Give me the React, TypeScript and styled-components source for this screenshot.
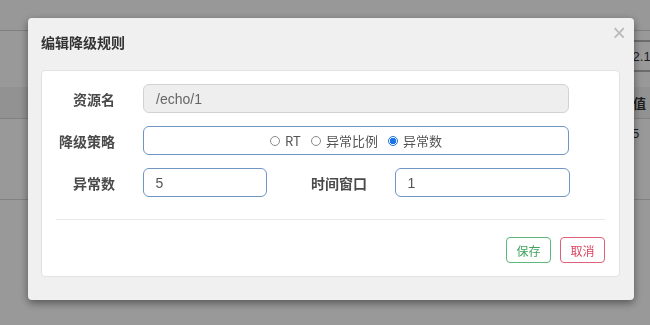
import React from 'react'
import styled, { createGlobalStyle } from 'styled-components';

const GlobalStyle = createGlobalStyle`
  html, body {
    margin: 0;
    padding: 0;
    background: #fff;
    font-family: "Liberation Sans", "Noto Sans CJK SC", sans-serif;
  }
  #root {
    width: 650px;
    height: 325px;
    overflow: hidden;
  }
`;

const strategies = [
  { key: 'rt', label: 'RT' },
  { key: 'ratio', label: '异常比例' },
  { key: 'count', label: '异常数' },
];

function App() {
  const checked = 'count';
  return (
    <Page>
      <GlobalStyle />
      <Navbar />
      <Content>
        <Toolbar>
          <MachineText>192.168.2.16</MachineText>
        </Toolbar>
        <Table>
          <HeadRow>
            <ThresholdCell>阈值</ThresholdCell>
          </HeadRow>
          <BodyRow>
            <ValueCell>5</ValueCell>
          </BodyRow>
        </Table>
      </Content>

      <Backdrop>
        <Modal>
          <ModalHeader>
            <ModalTitle>编辑降级规则</ModalTitle>
            <CloseButton>×</CloseButton>
          </ModalHeader>
          <Panel>
            <Form>
              <FormRow>
                <Label>资源名</Label>
                <TextInput value="/echo/1" disabled readOnly />
              </FormRow>
              <FormRow>
                <Label>降级策略</Label>
                <RadioBox>
                  {strategies.map(s => (
                    <RadioLabel key={s.key}>
                      <Radio type="radio" name="grade" defaultChecked={s.key === checked} />
                      {s.label}
                    </RadioLabel>
                  ))}
                </RadioBox>
              </FormRow>
              <PairRow>
                <Label>异常数</Label>
                <TextInput defaultValue="5" />
                <Label>时间窗口</Label>
                <TextInput defaultValue="1" />
              </PairRow>
            </Form>
            <Divider />
            <Actions>
              <ActionButton $tone="save">保存</ActionButton>
              <ActionButton $tone="cancel">取消</ActionButton>
            </Actions>
          </Panel>
        </Modal>
      </Backdrop>
    </Page>
  )
}

export default App

const Page = styled.div`
  position: relative;
  width: 650px;
  height: 325px;
  background: #fff;
`;

const Navbar = styled.div`
  height: 30px;
  border-bottom: 1px solid #d6d6d6;
  background: #fdfdfd;
`;

const Content = styled.div`
  padding-top: 9px;
`;

const Toolbar = styled.div`
  height: 28px;
  border-top: 2px solid #b5b5b5;
  border-bottom: 2px solid #b5b5b5;
  display: flex;
  align-items: center;
  margin-left: 600px;
  white-space: nowrap;
  overflow: hidden;
`;

const MachineText = styled.span`
  font-size: 13px;
  color: #333;
  margin-left: -18px;
`;

const Table = styled.div`
  margin-top: 15px;
`;

const HeadRow = styled.div`
  display: flex;
  justify-content: flex-end;
  height: 31px;
  align-items: center;
  background: #f3f3f3;
  border-bottom: 1px solid #d8d8d8;
  font-size: 13px;
  font-weight: 700;
  color: #333;
`;

const BodyRow = styled.div`
  display: flex;
  justify-content: flex-end;
  height: 80px;
  align-items: flex-start;
  border-bottom: 1px solid #d8d8d8;
  font-size: 13px;
  color: #333;
`;

const ThresholdCell = styled.div`
  white-space: nowrap;
  margin-right: 4px;
`;

const ValueCell = styled.div`
  width: 18px;
  margin-top: 7px;
`;

const Backdrop = styled.div`
  position: fixed;
  inset: 0;
  background: rgba(0, 0, 0, 0.4);
  padding: 18px 0 0 28px;
`;

const Modal = styled.div`
  width: 606px;
  height: 282px;
  box-sizing: border-box;
  background: #f0f0f0;
  border-radius: 4px;
  box-shadow: 0 3px 8px rgba(0, 0, 0, 0.45);
  padding: 0 14px 0 13px;
`;

const ModalHeader = styled.div`
  height: 52px;
  display: flex;
  justify-content: space-between;
  align-items: flex-start;
`;

const ModalTitle = styled.div`
  margin-top: 14px;
  font-size: 14px;
  font-weight: 700;
  color: #333;
  font-family: "Noto Sans CJK SC", sans-serif;
  line-height: 20px;
`;

const CloseButton = styled.button`
  margin-top: 2px;
  margin-right: -6px;
  padding: 0;
  border: none;
  background: none;
  font-family: "Liberation Sans", sans-serif;
  font-size: 23px;
  font-weight: 300;
  line-height: 26px;
  color: #b8b8b8;
  cursor: pointer;
`;

const Panel = styled.div`
  background: #fff;
  border: 1px solid #e2e2e2;
  border-radius: 4px;
  padding: 13px 14px 13px 14px;
`;

const Form = styled.div`
  width: 513px;
  display: flex;
  flex-direction: column;
  gap: 13px;
`;

const FormRow = styled.div`
  display: grid;
  grid-template-columns: 59px 1fr;
  column-gap: 28px;
  align-items: center;
  height: 29px;
`;

const PairRow = styled.div`
  display: grid;
  grid-template-columns: 59px 124px 73px 175px;
  column-gap: 27.5px;
  align-items: center;
  height: 29px;
`;

const Label = styled.label`
  text-align: right;
  font-size: 14px;
  font-weight: 700;
  color: #4a4a4a;
  font-family: "Noto Sans CJK SC", sans-serif;
  white-space: nowrap;
`;

const TextInput = styled.input`
  box-sizing: border-box;
  width: 100%;
  height: 29px;
  padding: 0 12px;
  border: 1px solid #6f95c4;
  border-radius: 6px;
  font-family: "Liberation Sans", "Noto Sans CJK SC", sans-serif;
  font-size: 14px;
  color: #555;
  background: #fff;
  outline: none;

  &:disabled {
    background: #eeeeee;
    border-color: #d2d2d2;
    color: #666;
  }
`;

const RadioBox = styled.div`
  box-sizing: border-box;
  height: 29px;
  border: 1px solid #6f95c4;
  border-radius: 6px;
  display: flex;
  justify-content: center;
  align-items: center;
  gap: 10px;
`;

const RadioLabel = styled.label`
  display: flex;
  align-items: center;
  gap: 5px;
  font-size: 13px;
  color: #555;
  font-family: "Noto Sans CJK SC", sans-serif;
`;

const Radio = styled.input`
  appearance: none;
  margin: 0;
  width: 10px;
  height: 10px;
  border: 1px solid #8a8a8a;
  border-radius: 50%;
  box-sizing: border-box;
  background: #fff;

  &:checked {
    border-color: #1a73e8;
    background: radial-gradient(circle, #1a73e8 0 3px, #fff 3.5px);
  }
`;

const Divider = styled.div`
  margin-top: 22px;
  height: 1px;
  background: #e8e8e8;
`;

const Actions = styled.div`
  margin-top: 17px;
  display: flex;
  justify-content: flex-end;
  gap: 9px;
`;

const ActionButton = styled.button<{ $tone: 'save' | 'cancel' }>`
  width: 45px;
  height: 26px;
  padding: 0;
  background: #fff;
  border-radius: 4px;
  font-size: 12px;
  font-family: "Noto Sans CJK SC", sans-serif;
  border: 1px solid ${p => (p.$tone === 'save' ? '#5cb87a' : '#df6177')};
  color: ${p => (p.$tone === 'save' ? '#3fa15c' : '#d9435d')};
  cursor: pointer;
`;
